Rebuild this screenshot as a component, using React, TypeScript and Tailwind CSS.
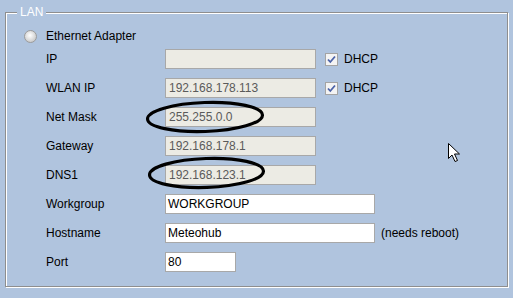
import React from "react";

const Check = () => (
  <div className="w-[13px] h-[13px] border border-[#a4a4a4] bg-[#f4f4f4] flex items-center justify-center">
    <svg width="9" height="9" viewBox="0 0 9 9">
      <path d="M1 4.5 L3.3 7 L8 1.5" fill="none" stroke="#4b62a8" strokeWidth="1.8" />
    </svg>
  </div>
);

function Row({ label, children }: { label: string; children: React.ReactNode }) {
  return (
    <div className="flex items-center h-[20px]">
      <div className="w-[119px] shrink-0">{label}</div>
      {children}
    </div>
  );
}

const DisInput = ({ value }: { value: string }) => (
  <div className="w-[151px] h-[20px] border border-[#a8a8a8] bg-[#ecebe4] text-[#5a5a5a] pl-[3px] leading-[18px]">{value}</div>
);

const Input = ({ value, w }: { value: string; w: string }) => (
  <div className={`${w} h-[20px] border border-[#a8a8a8] bg-white text-black pl-[2px] leading-[18px]`}>{value}</div>
);

export default function App() {
  return (
    <div
      className="relative w-[513px] h-[298px] bg-[#b0c4de] pt-[12px] pl-[5px] text-[12px] text-black"
      style={{ fontFamily: '"Liberation Sans", Arial, sans-serif' }}
    >
      <div className="relative w-[503px] h-[275px] border border-[#8e8e8e] shadow-[inset_1px_1px_0_#ffffff,1px_1px_0_#ffffff] pt-[13px]">
        <div className="absolute left-[11px] top-[-8px] px-[3px] bg-[#b0c4de] text-white leading-[14px]">LAN</div>
        <div className="flex items-center h-[20px] pl-[18px]">
          <div className="w-[13px] h-[13px] rounded-full border border-[#9c9c9c] bg-[radial-gradient(circle_at_45%_40%,#ffffff,#cfcfcf_70%,#bdbdbd)]" />
          <div className="ml-[9px]">Ethernet Adapter</div>
        </div>
        <div className="flex flex-col gap-[9px] pl-[40px] mt-[3px]">
          <Row label="IP">
            <DisInput value="" />
            <div className="ml-[9px]"><Check /></div>
            <div className="ml-[6px]">DHCP</div>
          </Row>
          <Row label="WLAN IP">
            <DisInput value="192.168.178.113" />
            <div className="ml-[9px]"><Check /></div>
            <div className="ml-[6px]">DHCP</div>
          </Row>
          <Row label="Net Mask">
            <DisInput value="255.255.0.0" />
          </Row>
          <Row label="Gateway">
            <DisInput value="192.168.178.1" />
          </Row>
          <Row label="DNS1">
            <DisInput value="192.168.123.1" />
          </Row>
          <Row label="Workgroup">
            <Input value="WORKGROUP" w="w-[210px]" />
          </Row>
          <Row label="Hostname">
            <Input value="Meteohub" w="w-[210px]" />
            <div className="ml-[6px]">(needs reboot)</div>
          </Row>
          <Row label="Port">
            <Input value="80" w="w-[71px]" />
          </Row>
        </div>
      </div>
      <svg className="absolute left-0 top-0 pointer-events-none" width="513" height="298">
        <ellipse cx="205" cy="117" rx="57.5" ry="14.5" fill="none" stroke="#000" strokeWidth="3.2" transform="rotate(-2 205 117)" />
        <ellipse cx="206.5" cy="173" rx="57" ry="14.5" fill="none" stroke="#000" strokeWidth="3.2" transform="rotate(-2 206 173)" />
        <path
          d="M448.5 143.5 L448.5 158.5 L452 155 L455 161.5 L457.5 160.5 L454.5 154 L459.5 154 Z"
          fill="#fff"
          stroke="#000"
          strokeWidth="1"
        />
      </svg>
    </div>
  );
}
